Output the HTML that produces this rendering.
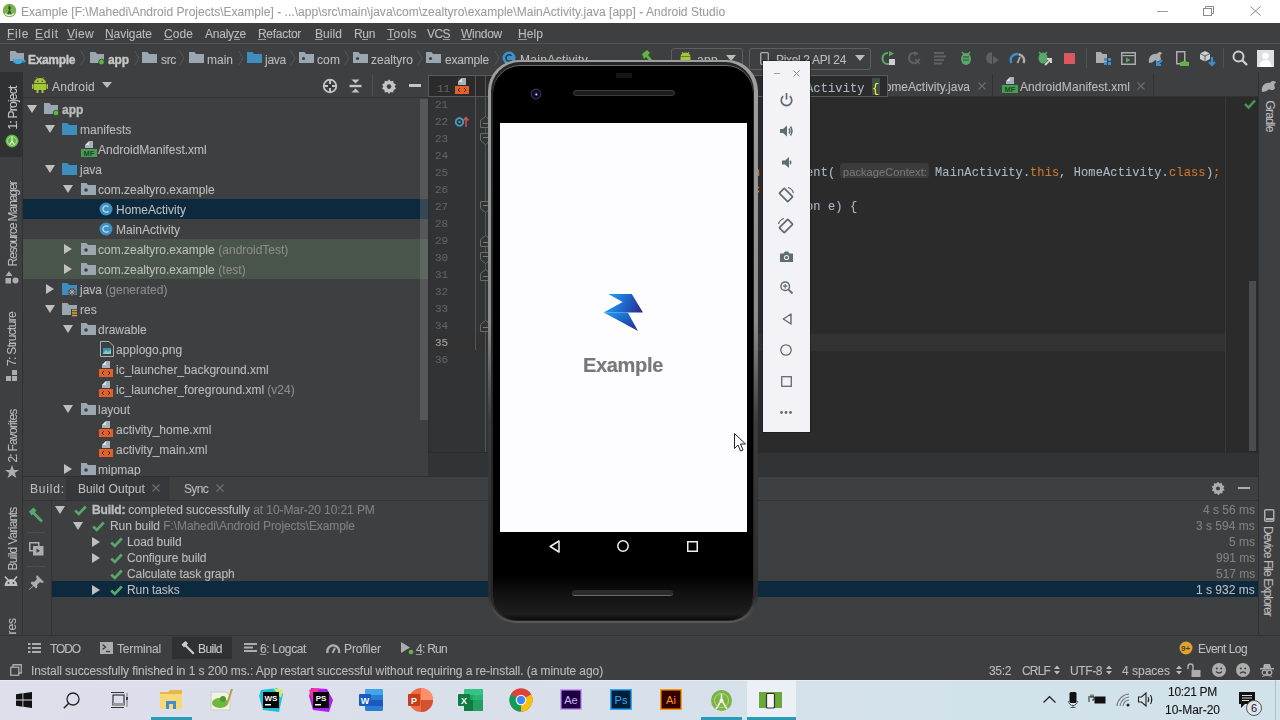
<!DOCTYPE html>
<html><head><meta charset="utf-8">
<style>
*{margin:0;padding:0;box-sizing:border-box}
html,body{width:1280px;height:720px;overflow:hidden;background:#3e3f41}
body{position:relative;font-family:"Liberation Sans",sans-serif;font-size:12px;color:#bbbbbb}
.a{position:absolute}
.t{position:absolute;white-space:pre;-webkit-text-stroke:0.1px currentColor;will-change:transform}
svg{position:absolute;overflow:visible}
u{text-decoration:underline;text-underline-offset:2px}
</style></head><body>

<div class="a" style="left:0px;top:0px;width:1280px;height:23px;background:#ffffff;"></div>
<svg style="left:2px;top:3px;" width="16" height="16" viewBox="0 0 16 16"><circle cx="7.5" cy="7.5" r="6.8" fill="#7fb24e"/><path d="M7.5 2.5V8.5M5.3 12.5L7.5 8L9.7 12.5" stroke="#2e5b2b" stroke-width="1.5" fill="none"/><circle cx="7.5" cy="5" r="1.3" fill="#2e5b2b"/><path d="M3.2 10.5A5 4 0 0 0 11.8 10.5" stroke="#eaf5e0" stroke-width="1.4" fill="none"/></svg>
<div class="t" style="left:21px;top:6px;font-size:12px;line-height:12px;color:#9c9c9c;font-family:'Liberation Sans',sans-serif;letter-spacing:0.031px;">Example [F:\Mahedi\Android Projects\Example] - ...\app\src\main\java\com\zealtyro\example\MainActivity.java [app] - Android Studio</div>
<div class="a" style="left:1157px;top:11px;width:11px;height:1px;background:#9a9a9a;"></div>
<svg style="left:1203px;top:6px;" width="11" height="10" viewBox="0 0 11 10"><rect x="0.5" y="2.5" width="8" height="7" fill="none" stroke="#8a8a8a"/><path d="M2.5 2.5V0.5H10.5V7.5H8.5" fill="none" stroke="#8a8a8a"/></svg>
<svg style="left:1250px;top:6px;" width="11" height="10" viewBox="0 0 11 10"><path d="M0.5 0.5L10.5 9.5M10.5 0.5L0.5 9.5" stroke="#8a8a8a" stroke-width="1"/></svg>
<div class="a" style="left:0px;top:23px;width:1280px;height:20px;background:#3e3f41;"></div>
<div class="a" style="left:0px;top:43px;width:1280px;height:1px;background:#515355;"></div>
<div class="t" style="left:7px;top:28px;font-size:12px;line-height:12px;color:#bbbbbb;font-family:'Liberation Sans',sans-serif;letter-spacing:0.664px;">File</div>
<div class="a" style="left:7px;top:39px;width:8px;height:1px;background:#9a9a9a;"></div>
<div class="t" style="left:35px;top:28px;font-size:12px;line-height:12px;color:#bbbbbb;font-family:'Liberation Sans',sans-serif;letter-spacing:0.832px;">Edit</div>
<div class="a" style="left:35px;top:39px;width:9px;height:1px;background:#9a9a9a;"></div>
<div class="t" style="left:67px;top:28px;font-size:12px;line-height:12px;color:#bbbbbb;font-family:'Liberation Sans',sans-serif;letter-spacing:0.301px;">View</div>
<div class="a" style="left:67px;top:39px;width:8px;height:1px;background:#9a9a9a;"></div>
<div class="t" style="left:105px;top:28px;font-size:12px;line-height:12px;color:#bbbbbb;font-family:'Liberation Sans',sans-serif;letter-spacing:-0.045px;">Navigate</div>
<div class="a" style="left:105px;top:39px;width:9px;height:1px;background:#9a9a9a;"></div>
<div class="t" style="left:164px;top:28px;font-size:12px;line-height:12px;color:#bbbbbb;font-family:'Liberation Sans',sans-serif;letter-spacing:0.078px;">Code</div>
<div class="a" style="left:164px;top:39px;width:9px;height:1px;background:#9a9a9a;"></div>
<div class="t" style="left:205px;top:28px;font-size:12px;line-height:12px;color:#bbbbbb;font-family:'Liberation Sans',sans-serif;letter-spacing:-0.241px;">Analyze</div>
<div class="a" style="left:234px;top:39px;width:6px;height:1px;background:#9a9a9a;"></div>
<div class="t" style="left:258px;top:28px;font-size:12px;line-height:12px;color:#bbbbbb;font-family:'Liberation Sans',sans-serif;letter-spacing:-0.293px;">Refactor</div>
<div class="a" style="left:258px;top:39px;width:8px;height:1px;background:#9a9a9a;"></div>
<div class="t" style="left:315px;top:28px;font-size:12px;line-height:12px;color:#bbbbbb;font-family:'Liberation Sans',sans-serif;letter-spacing:0.062px;">Build</div>
<div class="a" style="left:315px;top:39px;width:8px;height:1px;background:#9a9a9a;"></div>
<div class="t" style="left:354px;top:28px;font-size:12px;line-height:12px;color:#bbbbbb;font-family:'Liberation Sans',sans-serif;letter-spacing:-0.339px;">Run</div>
<div class="a" style="left:362px;top:39px;width:6px;height:1px;background:#9a9a9a;"></div>
<div class="t" style="left:387px;top:28px;font-size:12px;line-height:12px;color:#bbbbbb;font-family:'Liberation Sans',sans-serif;letter-spacing:0.397px;">Tools</div>
<div class="a" style="left:387px;top:39px;width:8px;height:1px;background:#9a9a9a;"></div>
<div class="t" style="left:427px;top:28px;font-size:12px;line-height:12px;color:#bbbbbb;font-family:'Liberation Sans',sans-serif;letter-spacing:-0.557px;">VCS</div>
<div class="a" style="left:443px;top:39px;width:7px;height:1px;background:#9a9a9a;"></div>
<div class="t" style="left:461px;top:28px;font-size:12px;line-height:12px;color:#bbbbbb;font-family:'Liberation Sans',sans-serif;letter-spacing:-0.281px;">Window</div>
<div class="a" style="left:461px;top:39px;width:11px;height:1px;background:#9a9a9a;"></div>
<div class="t" style="left:518px;top:28px;font-size:12px;line-height:12px;color:#bbbbbb;font-family:'Liberation Sans',sans-serif;letter-spacing:0.078px;">Help</div>
<div class="a" style="left:518px;top:39px;width:9px;height:1px;background:#9a9a9a;"></div>
<div class="a" style="left:0px;top:44px;width:1280px;height:28px;background:#3e3f41;"></div>
<svg style="left:10px;top:51px;" width="16" height="14" viewBox="0 0 16 14"><path d="M0 0H5.5L7 2H14V10H0Z" fill="#9aa7b0"/><path d="M3 8H13C13 12 11 13 8 13C5 13 3 12 3 8Z" fill="#40a8dc"/><path d="M12.5 9.5H15V11H12.5" stroke="#40a8dc" fill="none"/></svg>
<div class="t" style="left:28px;top:54px;font-size:12px;line-height:12px;color:#c8c8c8;font-family:'Liberation Sans',sans-serif;font-weight:bold;-webkit-text-stroke:0.35px currentColor;letter-spacing:-0.335px;">Example</div>
<svg style="left:80px;top:50px;" width="6" height="16" viewBox="0 0 6 16"><path d="M0.5 0.5L5 8L0.5 15.5" fill="none" stroke="#555759" stroke-width="1"/></svg>
<svg style="left:90px;top:52px;" width="15" height="13" viewBox="0 0 15 13"><path d="M0 0H5.5L7 2H14V11H0Z" fill="#9aa7b0"/><circle cx="11.5" cy="10" r="2.8" fill="#62b543" stroke="#2f4a2a" stroke-width="0.8"/></svg>
<div class="t" style="left:108px;top:54px;font-size:12px;line-height:12px;color:#c8c8c8;font-family:'Liberation Sans',sans-serif;font-weight:bold;-webkit-text-stroke:0.35px currentColor;letter-spacing:-0.109px;">app</div>
<svg style="left:134px;top:50px;" width="6" height="16" viewBox="0 0 6 16"><path d="M0.5 0.5L5 8L0.5 15.5" fill="none" stroke="#555759" stroke-width="1"/></svg>
<svg style="left:142px;top:52px;" width="15" height="11" viewBox="0 0 15 11"><path d="M0 0H5.5L7 2H15V11H0Z" fill="#9aa7b0"/></svg>
<div class="t" style="left:161px;top:54px;font-size:12px;line-height:12px;color:#bbbbbb;font-family:'Liberation Sans',sans-serif;letter-spacing:-0.333px;">src</div>
<svg style="left:179px;top:50px;" width="6" height="16" viewBox="0 0 6 16"><path d="M0.5 0.5L5 8L0.5 15.5" fill="none" stroke="#555759" stroke-width="1"/></svg>
<svg style="left:189px;top:52px;" width="15" height="11" viewBox="0 0 15 11"><path d="M0 0H5.5L7 2H15V11H0Z" fill="#9aa7b0"/></svg>
<div class="t" style="left:207px;top:54px;font-size:12px;line-height:12px;color:#bbbbbb;font-family:'Liberation Sans',sans-serif;letter-spacing:-0.004px;">main</div>
<svg style="left:238px;top:50px;" width="6" height="16" viewBox="0 0 6 16"><path d="M0.5 0.5L5 8L0.5 15.5" fill="none" stroke="#555759" stroke-width="1"/></svg>
<svg style="left:247px;top:52px;" width="15" height="11" viewBox="0 0 15 11"><path d="M0 0H5.5L7 2H15V11H0Z" fill="#3d8dbf"/></svg>
<div class="t" style="left:265px;top:54px;font-size:12px;line-height:12px;color:#bbbbbb;font-family:'Liberation Sans',sans-serif;letter-spacing:-0.254px;">java</div>
<svg style="left:290px;top:50px;" width="6" height="16" viewBox="0 0 6 16"><path d="M0.5 0.5L5 8L0.5 15.5" fill="none" stroke="#555759" stroke-width="1"/></svg>
<svg style="left:299px;top:52px;" width="15" height="11" viewBox="0 0 15 11"><path d="M0 0H5.5L7 2H15V11H0Z" fill="#9aa7b0"/><circle cx="4.5" cy="6.5" r="1.6" fill="#3e3f41"/></svg>
<div class="t" style="left:317px;top:54px;font-size:12px;line-height:12px;color:#bbbbbb;font-family:'Liberation Sans',sans-serif;letter-spacing:0.109px;">com</div>
<svg style="left:344px;top:50px;" width="6" height="16" viewBox="0 0 6 16"><path d="M0.5 0.5L5 8L0.5 15.5" fill="none" stroke="#555759" stroke-width="1"/></svg>
<svg style="left:353px;top:52px;" width="15" height="11" viewBox="0 0 15 11"><path d="M0 0H5.5L7 2H15V11H0Z" fill="#9aa7b0"/><circle cx="4.5" cy="6.5" r="1.6" fill="#3e3f41"/></svg>
<div class="t" style="left:371px;top:54px;font-size:12px;line-height:12px;color:#bbbbbb;font-family:'Liberation Sans',sans-serif;letter-spacing:-0.002px;">zealtyro</div>
<svg style="left:417px;top:50px;" width="6" height="16" viewBox="0 0 6 16"><path d="M0.5 0.5L5 8L0.5 15.5" fill="none" stroke="#555759" stroke-width="1"/></svg>
<svg style="left:426px;top:52px;" width="15" height="11" viewBox="0 0 15 11"><path d="M0 0H5.5L7 2H15V11H0Z" fill="#9aa7b0"/><circle cx="4.5" cy="6.5" r="1.6" fill="#3e3f41"/></svg>
<div class="t" style="left:445px;top:54px;font-size:12px;line-height:12px;color:#bbbbbb;font-family:'Liberation Sans',sans-serif;letter-spacing:-0.194px;">example</div>
<svg style="left:494px;top:50px;" width="6" height="16" viewBox="0 0 6 16"><path d="M0.5 0.5L5 8L0.5 15.5" fill="none" stroke="#555759" stroke-width="1"/></svg>
<svg style="left:502px;top:51px;" width="14" height="14" viewBox="0 0 14 14"><circle cx="7" cy="7" r="6.5" fill="#3e91c4"/><path d="M9.5 4.8A3.2 3.2 0 1 0 9.5 9.2" fill="none" stroke="#1c3b52" stroke-width="1.6"/></svg>
<div class="t" style="left:520px;top:54px;font-size:12px;line-height:12px;color:#bbbbbb;font-family:'Liberation Sans',sans-serif;letter-spacing:0.332px;">MainActivity</div>
<svg style="left:641px;top:50px;" width="14" height="14" viewBox="0 0 14 14"><path d="M1 4L6 0L9 3L7 5L13 12L11 14L5 7L3 9Z" fill="#62b543"/></svg>
<div class="a" style="left:671px;top:48px;width:72px;height:22px;background:none;border:1px solid #5e6060;border-radius:3px"></div>
<svg style="left:679px;top:52px;" width="13" height="13" viewBox="0 0 13 13"><path d="M1.5 5H11.5V10.5H1.5Z" fill="#a4c639"/><path d="M1.5 4.5A5 4 0 0 1 11.5 4.5Z" fill="#a4c639"/><path d="M3 0L4.5 2.5M10 0L8.5 2.5" stroke="#a4c639"/></svg>
<div class="t" style="left:697px;top:54px;font-size:12px;line-height:12px;color:#bbbbbb;font-family:'Liberation Sans',sans-serif;letter-spacing:0.328px;">app</div>
<svg style="left:726px;top:55px;" width="10" height="6" viewBox="0 0 10 6"><path d="M0 0H10L5 6Z" fill="#bbbbbb"/></svg>
<div class="a" style="left:749px;top:48px;width:122px;height:22px;background:none;border:1px solid #5e6060;border-radius:3px"></div>
<svg style="left:760px;top:52px;" width="9" height="13" viewBox="0 0 9 13"><rect x="0.7" y="0.7" width="7.6" height="11.6" rx="1" fill="none" stroke="#adadad" stroke-width="1.3"/></svg>
<div class="t" style="left:776px;top:54px;font-size:12px;line-height:12px;color:#bbbbbb;font-family:'Liberation Sans',sans-serif;letter-spacing:-0.335px;">Pixel 2 API 24</div>
<svg style="left:855px;top:55px;" width="10" height="6" viewBox="0 0 10 6"><path d="M0 0H10L5 6Z" fill="#bbbbbb"/></svg>
<svg style="left:881px;top:51px;" width="15" height="14" viewBox="0 0 15 14"><path d="M7 2A5.5 5.5 0 1 0 12.5 8" fill="none" stroke="#59a869" stroke-width="2.2"/><path d="M8 0L13 2.5L8 5.5Z" fill="#59a869"/><rect x="8" y="8" width="6" height="6" fill="#cfcfcf"/></svg>
<svg style="left:907px;top:51px;" width="14" height="14" viewBox="0 0 14 14"><path d="M7 2A5 5 0 1 0 12 8" fill="none" stroke="#5e6163" stroke-width="2.2"/><path d="M7 0L12 2.5L7 5Z" fill="#5e6163"/><path d="M8 8L13 13M13 8L8 13" stroke="#5e6163" stroke-width="1.5"/></svg>
<svg style="left:934px;top:52px;" width="14" height="13" viewBox="0 0 14 13"><path d="M0 1H10M0 4.5H12M0 8H10M0 11.5H8" stroke="#5e6163" stroke-width="2"/></svg>
<svg style="left:959px;top:51px;" width="14" height="14" viewBox="0 0 14 14"><ellipse cx="7" cy="8" rx="5" ry="6" fill="#59a869"/><path d="M3 1L5 3M11 1L9 3" stroke="#59a869" stroke-width="1.5"/><path d="M4 6H10M4 9H10" stroke="#3e3f41" stroke-width="1.2"/></svg>
<svg style="left:985px;top:51px;" width="15" height="14" viewBox="0 0 15 14"><path d="M7 1A6 6 0 1 0 7 13" fill="#5e6163"/><path d="M8 5L14 9L8 13Z" fill="#5e6163"/></svg>
<svg style="left:1010px;top:52px;" width="15" height="12" viewBox="0 0 15 12"><path d="M1.5 11A6 6 0 0 1 9 2.5" fill="none" stroke="#3d8fd0" stroke-width="2.4"/><path d="M9 2.5A6 6 0 0 1 13.5 11" fill="none" stroke="#adadad" stroke-width="2.4"/><path d="M7.5 11L10 5" stroke="#adadad" stroke-width="1.8"/></svg>
<svg style="left:1037px;top:51px;" width="15" height="14" viewBox="0 0 15 14"><ellipse cx="6" cy="7" rx="4.5" ry="5.5" fill="#59a869"/><path d="M2 1L4 3M10 1L8 3" stroke="#59a869" stroke-width="1.5"/><path d="M8 14L14 8M10 8H14V12" stroke="#cfcfcf" stroke-width="2" fill="none"/></svg>
<div class="a" style="left:1064px;top:53px;width:11px;height:11px;background:#db5860;"></div>
<div class="a" style="left:1086px;top:48px;width:1px;height:20px;background:#4e5052;"></div>
<svg style="left:1096px;top:52px;" width="15" height="13" viewBox="0 0 15 13"><path d="M0 0H5L6.5 2H11V11H0Z" fill="#adadad"/><rect x="8" y="6" width="3" height="3" fill="#3d8fd0"/><rect x="12" y="6" width="3" height="3" fill="#3d8fd0"/><rect x="8" y="10" width="3" height="3" fill="#3d8fd0"/><rect x="12" y="10" width="3" height="3" fill="#3d8fd0"/></svg>
<svg style="left:1121px;top:52px;" width="15" height="13" viewBox="0 0 15 13"><rect x="0.75" y="0.75" width="13.5" height="11.5" fill="none" stroke="#adadad" stroke-width="1.5"/><rect x="1.5" y="3" width="12" height="1.2" fill="#adadad"/><path d="M5 5.5L9.5 8L5 10.5Z" fill="#59a869"/></svg>
<svg style="left:1148px;top:51px;" width="16" height="15" viewBox="0 0 16 15"><path d="M1 12C0 6 4 2 9 3C11 0 14 1 14 3C12 3 12 5 13 8C12 11 8 10 7 9C6 11 3 12 1 12Z" fill="#adadad"/><path d="M9 14L14 9M9 10V14H13" stroke="#3d8fd0" stroke-width="2" fill="none"/></svg>
<svg style="left:1176px;top:51px;" width="13" height="15" viewBox="0 0 13 15"><rect x="0.75" y="0.75" width="8" height="12" fill="none" stroke="#adadad" stroke-width="1.5"/><path d="M4 14A4.5 4 0 0 1 13 14Z" fill="#62b543"/><rect x="4" y="11" width="9" height="4" fill="#62b543"/></svg>
<svg style="left:1200px;top:51px;" width="16" height="16" viewBox="0 0 16 16"><path d="M5 0L10 2.5V8L5 10.5L0 8V2.5Z" fill="#cfcfcf"/><path d="M5 5V10.5M0 2.5L5 5L10 2.5" stroke="#3e3f41" stroke-width="0.8" fill="none"/><path d="M12 6V14M9 11L12 14L15 11" stroke="#3d8fd0" stroke-width="2" fill="none"/></svg>
<div class="a" style="left:1223px;top:48px;width:1px;height:20px;background:#4e5052;"></div>
<svg style="left:1232px;top:50px;" width="16" height="17" viewBox="0 0 16 17"><circle cx="6.5" cy="6.5" r="5" fill="none" stroke="#cfcfcf" stroke-width="2"/><path d="M10 10L15 15" stroke="#cfcfcf" stroke-width="2.4"/></svg>
<svg style="left:1257px;top:50px;" width="17" height="17" viewBox="0 0 17 17"><rect width="17" height="17" fill="#e0e0e0"/><circle cx="8.5" cy="6" r="3.2" fill="#fff"/><path d="M2.5 17C2.5 12 5 10 8.5 10C12 10 14.5 12 14.5 17Z" fill="#fff"/></svg>
<div class="a" style="left:0px;top:72px;width:22px;height:562px;background:#3e3f41;"></div>
<div class="a" style="left:0px;top:72px;width:22px;height:85px;background:#2f3133;"></div>
<div class="a" style="left:22px;top:72px;width:1px;height:562px;background:#2e3032;"></div>
<div class="t" style="left:-9.5px;top:101.5px;width:63px;font-size:12px;line-height:12px;color:#c8c8c8;letter-spacing:-0.767px;transform-origin:21.5px 6.0px;transform:rotate(-90deg);will-change:auto">1: Project</div>
<svg style="left:5px;top:134px;" width="14" height="14" viewBox="0 0 14 14"><circle cx="7" cy="7" r="6.5" fill="#62b543"/><path d="M7 3V7.5M4.5 11L7 7L9.5 11" stroke="#e8f5e0" stroke-width="1.2" fill="none"/><circle cx="7" cy="7" r="4.5" fill="none" stroke="#cfe8c0" stroke-width="0.7"/></svg>
<div class="t" style="left:-30.5px;top:217.5px;width:105px;font-size:12px;line-height:12px;color:#bbbbbb;letter-spacing:-1.065px;transform-origin:42.5px 6.0px;transform:rotate(-90deg);will-change:auto">Resource Manager</div>
<svg style="left:5px;top:271px;" width="14" height="13" viewBox="0 0 14 13"><path d="M4 0L7.5 5H0.5Z" fill="#adadad"/><rect x="0.5" y="7" width="5.5" height="5.5" fill="#adadad"/><circle cx="10.5" cy="9.5" r="3" fill="#adadad"/></svg>
<div class="t" style="left:-15.0px;top:333.0px;width:74px;font-size:12px;line-height:12px;color:#bbbbbb;letter-spacing:-0.667px;transform-origin:27.0px 6.0px;transform:rotate(-90deg);will-change:auto">7: Structure</div>
<svg style="left:6px;top:370px;" width="12" height="12" viewBox="0 0 12 12"><rect x="0" y="6" width="5" height="5" fill="#adadad"/><rect x="6" y="6" width="5" height="5" fill="#adadad"/><rect x="6" y="0" width="5" height="5" fill="#adadad"/></svg>
<div class="t" style="left:-14.5px;top:429.5px;width:73px;font-size:12px;line-height:12px;color:#bbbbbb;letter-spacing:-0.806px;transform-origin:26.5px 6.0px;transform:rotate(-90deg);will-change:auto">2: Favorites</div>
<svg style="left:5px;top:465px;" width="14" height="14" viewBox="0 0 14 14"><path d="M7 0L8.8 5H14L9.8 8L11.4 13L7 10L2.6 13L4.2 8L0 5H5.2Z" fill="#adadad"/></svg>
<div class="t" style="left:-19.5px;top:532.5px;width:83px;font-size:12px;line-height:12px;color:#bbbbbb;letter-spacing:-0.724px;transform-origin:31.5px 6.0px;transform:rotate(-90deg);will-change:auto">Build Variants</div>
<svg style="left:4px;top:576px;" width="14" height="10" viewBox="0 0 14 10"><path d="M0.5 10A6.5 7 0 0 1 13.5 10Z" fill="#c0c0c0"/><path d="M1 0.5L4 4M13 0.5L10 4" stroke="#c0c0c0" stroke-width="1.6"/><circle cx="4.5" cy="7" r="0.9" fill="#3e3f41"/><circle cx="9.5" cy="7" r="0.9" fill="#3e3f41"/></svg>
<div class="t" style="left:-32.0px;top:656.0px;width:108.03125px;font-size:12px;line-height:12px;color:#bbbbbb;letter-spacing:0.000px;transform-origin:44.0px 6.0px;transform:rotate(-90deg);will-change:auto">Layout Captures</div>
<div class="a" style="left:0px;top:634px;width:22px;height:2px;background:#3e3f41;"></div>
<div class="a" style="left:23px;top:72px;width:405px;height:404px;background:#3e3f41;"></div>
<div class="a" style="left:23px;top:97px;width:405px;height:1px;background:#323232;"></div>
<svg style="left:32px;top:77px;" width="16" height="17" viewBox="0 0 16 17"><path d="M2 7H14V13H2Z" fill="#a4c639"/><path d="M2 6.3A6 5.3 0 0 1 14 6.3Z" fill="#a4c639"/><rect x="0" y="7" width="1.6" height="5" rx="0.8" fill="#a4c639"/><rect x="14.4" y="7" width="1.6" height="5" rx="0.8" fill="#a4c639"/><rect x="4.5" y="12" width="2" height="4" fill="#a4c639"/><rect x="9.5" y="12" width="2" height="4" fill="#a4c639"/><path d="M4.5 0.5L6 2.5M11.5 0.5L10 2.5" stroke="#a4c639"/><circle cx="5.7" cy="4.2" r="0.7" fill="#3e3f41"/><circle cx="10.3" cy="4.2" r="0.7" fill="#3e3f41"/></svg>
<div class="t" style="left:52px;top:81px;font-size:12px;line-height:12px;color:#bbbbbb;font-family:'Liberation Sans',sans-serif;letter-spacing:0.234px;">Android</div>
<svg style="left:102px;top:82px;" width="10" height="6" viewBox="0 0 10 6"><path d="M0 0H10L5 6Z" fill="#bbbbbb"/></svg>
<svg style="left:322px;top:78px;" width="16" height="16" viewBox="0 0 16 16"><circle cx="8" cy="8" r="6.3" fill="none" stroke="#c4c4c4" stroke-width="1.8"/><path d="M8 2V6M8 10V14M2 8H6M10 8H14" stroke="#c4c4c4" stroke-width="2"/><rect x="6.5" y="6.5" width="3" height="3" fill="#333"/></svg>
<svg style="left:349px;top:79px;" width="13" height="14" viewBox="0 0 13 14"><path d="M2.5 0.5H10.5L6.5 4.5Z" fill="#c4c4c4"/><rect x="0.5" y="5.8" width="12" height="2.4" fill="#c4c4c4"/><path d="M2.5 13.5H10.5L6.5 9.5Z" fill="#c4c4c4"/></svg>
<div class="a" style="left:372px;top:75px;width:1px;height:21px;background:#4e5052;"></div>
<svg style="left:382px;top:79px;" width="14" height="14" viewBox="0 0 14 14"><path d="M7 0.3L8.6 2.3L11.2 1.8L11.6 4.3L14 5.4L12.7 7.6L14 9.8L11.6 10.9L11.2 13.4L8.6 12.9L7 14.9L5.4 12.9L2.8 13.4L2.4 10.9L0 9.8L1.3 7.6L0 5.4L2.4 4.3L2.8 1.8L5.4 2.3Z" fill="#c4c4c4"/><circle cx="7" cy="7.6" r="2.3" fill="#3e3f41"/></svg>
<div class="a" style="left:409px;top:84px;width:12px;height:3px;background:#c4c4c4;"></div>
<div class="a" style="left:0;top:0;width:1280px;height:720px;clip-path:inset(98px 852px 244px 23px)">
<svg style="left:27px;top:105px;" width="10" height="8" viewBox="0 0 10 8"><path d="M0 0H10L5 8Z" fill="#bfbfbf"/></svg>
<svg style="left:44px;top:103px;" width="15" height="13" viewBox="0 0 15 13"><path d="M0 0H5.5L7 2H14V11H0Z" fill="#9aa7b0"/><circle cx="12" cy="10" r="2.8" fill="#62b543" stroke="#2f4a2a" stroke-width="0.8"/></svg>
<div class="t" style="left:62px;top:104px;font-size:12px;line-height:12px;color:#bbbbbb;font-family:'Liberation Sans',sans-serif;font-weight:bold;-webkit-text-stroke:0.35px currentColor;">app</div>
<svg style="left:45px;top:125px;" width="10" height="8" viewBox="0 0 10 8"><path d="M0 0H10L5 8Z" fill="#bfbfbf"/></svg>
<svg style="left:62px;top:123px;" width="15" height="12" viewBox="0 0 15 12"><path d="M0 0H5.5L7 2H15V12H0Z" fill="#3d8dbf"/></svg>
<div class="t" style="left:80px;top:124px;font-size:12px;line-height:12px;color:#bbbbbb;font-family:'Liberation Sans',sans-serif;">manifests</div>
<svg style="left:81px;top:141px;" width="16" height="16" viewBox="0 0 16 16"><path d="M4 0H12V7H4Z" fill="#a9b2ba"/><path d="M4 4L8 0V4Z" fill="#dfe3e6"/><path d="M4 0H8L4 4Z" fill="#3e3f41"/><rect x="0" y="8" width="16" height="8" fill="#499c54"/><text x="8" y="15" font-size="7.5" font-family="Liberation Sans" font-weight="bold" fill="#1f4a25" text-anchor="middle">MF</text></svg>
<div class="t" style="left:98px;top:144px;font-size:12px;line-height:12px;color:#bbbbbb;font-family:'Liberation Sans',sans-serif;">AndroidManifest.xml</div>
<svg style="left:45px;top:165px;" width="10" height="8" viewBox="0 0 10 8"><path d="M0 0H10L5 8Z" fill="#bfbfbf"/></svg>
<svg style="left:62px;top:163px;" width="15" height="12" viewBox="0 0 15 12"><path d="M0 0H5.5L7 2H15V12H0Z" fill="#3d8dbf"/></svg>
<div class="t" style="left:80px;top:164px;font-size:12px;line-height:12px;color:#bbbbbb;font-family:'Liberation Sans',sans-serif;">java</div>
<svg style="left:63px;top:185px;" width="10" height="8" viewBox="0 0 10 8"><path d="M0 0H10L5 8Z" fill="#bfbfbf"/></svg>
<svg style="left:81px;top:183px;" width="15" height="12" viewBox="0 0 15 12"><path d="M0 0H5.5L7 2H15V12H0Z" fill="#9aa7b0"/><circle cx="5" cy="7" r="1.8" fill="#3e3f41"/></svg>
<div class="t" style="left:98px;top:184px;font-size:12px;line-height:12px;color:#bbbbbb;font-family:'Liberation Sans',sans-serif;">com.zealtyro.example</div>
<div class="a" style="left:23px;top:199px;width:405px;height:20px;background:#0d293e;"></div>
<svg style="left:99px;top:202px;" width="14" height="14" viewBox="0 0 14 14"><circle cx="7" cy="7" r="6.5" fill="#3e91c4"/><path d="M9.5 4.8A3.2 3.2 0 1 0 9.5 9.2" fill="none" stroke="#b8d8ec" stroke-width="1.3"/></svg>
<div class="t" style="left:116px;top:204px;font-size:12px;line-height:12px;color:#bbbbbb;font-family:'Liberation Sans',sans-serif;">HomeActivity</div>
<svg style="left:99px;top:222px;" width="14" height="14" viewBox="0 0 14 14"><circle cx="7" cy="7" r="6.5" fill="#3e91c4"/><path d="M9.5 4.8A3.2 3.2 0 1 0 9.5 9.2" fill="none" stroke="#b8d8ec" stroke-width="1.3"/></svg>
<div class="t" style="left:116px;top:224px;font-size:12px;line-height:12px;color:#bbbbbb;font-family:'Liberation Sans',sans-serif;">MainActivity</div>
<div class="a" style="left:23px;top:239px;width:405px;height:20px;background:#49544a;"></div>
<svg style="left:64px;top:244px;" width="8" height="10" viewBox="0 0 8 10"><path d="M0 0L8 5L0 10Z" fill="#bfbfbf"/></svg>
<svg style="left:81px;top:243px;" width="15" height="12" viewBox="0 0 15 12"><path d="M0 0H5.5L7 2H15V12H0Z" fill="#9aa7b0"/><circle cx="5" cy="7" r="1.8" fill="#3e3f41"/></svg>
<div class="t" style="left:98px;top:244px;font-size:12px;line-height:12px;color:#bbbbbb;font-family:'Liberation Sans',sans-serif;">com.zealtyro.example</div>
<div class="t" style="left:214.703125px;top:244px;font-size:12px;line-height:12px;color:#8c8c8c;font-family:'Liberation Sans',sans-serif;"> (androidTest)</div>
<div class="a" style="left:23px;top:259px;width:405px;height:20px;background:#49544a;"></div>
<svg style="left:64px;top:264px;" width="8" height="10" viewBox="0 0 8 10"><path d="M0 0L8 5L0 10Z" fill="#bfbfbf"/></svg>
<svg style="left:81px;top:263px;" width="15" height="12" viewBox="0 0 15 12"><path d="M0 0H5.5L7 2H15V12H0Z" fill="#9aa7b0"/><circle cx="5" cy="7" r="1.8" fill="#3e3f41"/></svg>
<div class="t" style="left:98px;top:264px;font-size:12px;line-height:12px;color:#bbbbbb;font-family:'Liberation Sans',sans-serif;">com.zealtyro.example</div>
<div class="t" style="left:214.703125px;top:264px;font-size:12px;line-height:12px;color:#8c8c8c;font-family:'Liberation Sans',sans-serif;"> (test)</div>
<svg style="left:46px;top:284px;" width="8" height="10" viewBox="0 0 8 10"><path d="M0 0L8 5L0 10Z" fill="#bfbfbf"/></svg>
<svg style="left:62px;top:283px;" width="15" height="13" viewBox="0 0 15 13"><path d="M0 0H5.5L7 2H15V12H0Z" fill="#3d8dbf"/><circle cx="10" cy="9" r="3.8" fill="#3e3f41"/><path d="M10 5.5V12.5M6.5 9H13.5M7.5 6.5L12.5 11.5M12.5 6.5L7.5 11.5" stroke="#adadad" stroke-width="1"/></svg>
<div class="t" style="left:80px;top:284px;font-size:12px;line-height:12px;color:#bbbbbb;font-family:'Liberation Sans',sans-serif;">java</div>
<div class="t" style="left:102.015625px;top:284px;font-size:12px;line-height:12px;color:#8c8c8c;font-family:'Liberation Sans',sans-serif;"> (generated)</div>
<svg style="left:45px;top:305px;" width="10" height="8" viewBox="0 0 10 8"><path d="M0 0H10L5 8Z" fill="#bfbfbf"/></svg>
<svg style="left:62px;top:303px;" width="16" height="14" viewBox="0 0 16 14"><path d="M0 0H5.5L7 2H15V12H0Z" fill="#9aa7b0"/><rect x="9" y="6" width="7" height="8" fill="#3e3f41"/><path d="M10 7.5H15M10 10H15M10 12.5H15" stroke="#d9a343" stroke-width="1.4"/></svg>
<div class="t" style="left:80px;top:304px;font-size:12px;line-height:12px;color:#bbbbbb;font-family:'Liberation Sans',sans-serif;">res</div>
<svg style="left:63px;top:325px;" width="10" height="8" viewBox="0 0 10 8"><path d="M0 0H10L5 8Z" fill="#bfbfbf"/></svg>
<svg style="left:81px;top:323px;" width="15" height="12" viewBox="0 0 15 12"><path d="M0 0H5.5L7 2H15V12H0Z" fill="#9aa7b0"/><circle cx="5" cy="7" r="1.8" fill="#3e3f41"/></svg>
<div class="t" style="left:98px;top:324px;font-size:12px;line-height:12px;color:#bbbbbb;font-family:'Liberation Sans',sans-serif;">drawable</div>
<svg style="left:100px;top:341px;" width="14" height="16" viewBox="0 0 14 16"><path d="M0.5 0.5H9L13.5 5V15.5H0.5Z" fill="#3e3f41" stroke="#a9b2ba"/><rect x="3" y="7" width="8" height="6" fill="#3f8fa6"/><path d="M3 12L6 9L8 11L11 8V13H3Z" fill="#7ec8c8"/></svg>
<div class="t" style="left:116px;top:344px;font-size:12px;line-height:12px;color:#bbbbbb;font-family:'Liberation Sans',sans-serif;">applogo.png</div>
<svg style="left:98px;top:361px;" width="16" height="16" viewBox="0 0 16 16"><path d="M4 0H12V7H4Z" fill="#a9b2ba"/><path d="M4 0L8 0L4 4Z" fill="#3e3f41"/><path d="M4 4L8 0V4Z" fill="#dfe3e6"/><rect x="1" y="8" width="14" height="8" fill="#e0622a"/><path d="M6 10L4 12L6 14M10 10L12 12L10 14" stroke="#5a1d05" stroke-width="1" fill="none"/></svg>
<div class="t" style="left:116px;top:364px;font-size:12px;line-height:12px;color:#bbbbbb;font-family:'Liberation Sans',sans-serif;">ic_launcher_background.xml</div>
<svg style="left:98px;top:381px;" width="16" height="16" viewBox="0 0 16 16"><path d="M4 0H12V7H4Z" fill="#a9b2ba"/><path d="M4 0L8 0L4 4Z" fill="#3e3f41"/><path d="M4 4L8 0V4Z" fill="#dfe3e6"/><rect x="1" y="8" width="14" height="8" fill="#e0622a"/><path d="M6 10L4 12L6 14M10 10L12 12L10 14" stroke="#5a1d05" stroke-width="1" fill="none"/></svg>
<div class="t" style="left:116px;top:384px;font-size:12px;line-height:12px;color:#bbbbbb;font-family:'Liberation Sans',sans-serif;">ic_launcher_foreground.xml</div>
<div class="t" style="left:264.078125px;top:384px;font-size:12px;line-height:12px;color:#8c8c8c;font-family:'Liberation Sans',sans-serif;"> (v24)</div>
<svg style="left:63px;top:405px;" width="10" height="8" viewBox="0 0 10 8"><path d="M0 0H10L5 8Z" fill="#bfbfbf"/></svg>
<svg style="left:81px;top:403px;" width="15" height="12" viewBox="0 0 15 12"><path d="M0 0H5.5L7 2H15V12H0Z" fill="#9aa7b0"/><circle cx="5" cy="7" r="1.8" fill="#3e3f41"/></svg>
<div class="t" style="left:98px;top:404px;font-size:12px;line-height:12px;color:#bbbbbb;font-family:'Liberation Sans',sans-serif;">layout</div>
<svg style="left:98px;top:421px;" width="16" height="16" viewBox="0 0 16 16"><path d="M4 0H12V7H4Z" fill="#a9b2ba"/><path d="M4 0L8 0L4 4Z" fill="#3e3f41"/><path d="M4 4L8 0V4Z" fill="#dfe3e6"/><rect x="1" y="8" width="14" height="8" fill="#e0622a"/><path d="M6 10L4 12L6 14M10 10L12 12L10 14" stroke="#5a1d05" stroke-width="1" fill="none"/></svg>
<div class="t" style="left:116px;top:424px;font-size:12px;line-height:12px;color:#bbbbbb;font-family:'Liberation Sans',sans-serif;">activity_home.xml</div>
<svg style="left:98px;top:441px;" width="16" height="16" viewBox="0 0 16 16"><path d="M4 0H12V7H4Z" fill="#a9b2ba"/><path d="M4 0L8 0L4 4Z" fill="#3e3f41"/><path d="M4 4L8 0V4Z" fill="#dfe3e6"/><rect x="1" y="8" width="14" height="8" fill="#e0622a"/><path d="M6 10L4 12L6 14M10 10L12 12L10 14" stroke="#5a1d05" stroke-width="1" fill="none"/></svg>
<div class="t" style="left:116px;top:444px;font-size:12px;line-height:12px;color:#bbbbbb;font-family:'Liberation Sans',sans-serif;">activity_main.xml</div>
<svg style="left:64px;top:464px;" width="8" height="10" viewBox="0 0 8 10"><path d="M0 0L8 5L0 10Z" fill="#bfbfbf"/></svg>
<svg style="left:81px;top:463px;" width="15" height="12" viewBox="0 0 15 12"><path d="M0 0H5.5L7 2H15V12H0Z" fill="#9aa7b0"/><circle cx="5" cy="7" r="1.8" fill="#3e3f41"/></svg>
<div class="t" style="left:98px;top:464px;font-size:12px;line-height:12px;color:#bbbbbb;font-family:'Liberation Sans',sans-serif;">mipmap</div>
</div>
<div class="a" style="left:420px;top:99px;width:8px;height:321px;background:rgba(150,152,155,0.28);"></div>
<div class="a" style="left:428px;top:72px;width:830px;height:25px;background:#3e3f41;"></div>
<div class="a" style="left:428px;top:96px;width:830px;height:1px;background:#323232;"></div>
<div class="t" style="left:876px;top:81px;font-size:12px;line-height:12px;color:#bbbbbb;font-family:'Liberation Sans',sans-serif;letter-spacing:-0.028px;">HomeActivity.java</div>
<svg style="left:978px;top:82px;" width="8" height="8" viewBox="0 0 8 8"><path d="M0.5 0.5L7.5 7.5M7.5 0.5L0.5 7.5" stroke="#6e6e6e" stroke-width="1.1"/></svg>
<div class="a" style="left:992px;top:74px;width:1px;height:22px;background:#323232;"></div>
<svg style="left:1002px;top:77px;" width="16" height="16" viewBox="0 0 16 16"><path d="M4 0H12V7H4Z" fill="#a9b2ba"/><path d="M4 4L8 0V4Z" fill="#dfe3e6"/><path d="M4 0H8L4 4Z" fill="#3e3f41"/><rect x="0" y="8" width="16" height="8" fill="#499c54"/><text x="8" y="15" font-size="7.5" font-family="Liberation Sans" font-weight="bold" fill="#1f4a25" text-anchor="middle">MF</text></svg>
<div class="t" style="left:1020px;top:81px;font-size:12px;line-height:12px;color:#bbbbbb;font-family:'Liberation Sans',sans-serif;letter-spacing:0.068px;">AndroidManifest.xml</div>
<svg style="left:1137px;top:82px;" width="8" height="8" viewBox="0 0 8 8"><path d="M0.5 0.5L7.5 7.5M7.5 0.5L0.5 7.5" stroke="#6e6e6e" stroke-width="1.1"/></svg>
<div class="a" style="left:1153px;top:74px;width:1px;height:22px;background:#323232;"></div>
<div class="a" style="left:428px;top:97px;width:62px;height:355px;background:#313335;"></div>
<div class="a" style="left:428px;top:97px;width:3px;height:355px;background:#2e3032;"></div>
<div class="a" style="left:490px;top:97px;width:768px;height:355px;background:#2b2b2b;"></div>
<div class="a" style="left:1225px;top:97px;width:1px;height:355px;background:#3a3a3a;"></div>
<div class="a" style="left:431px;top:334px;width:794px;height:17px;background:#323232;"></div>
<svg style="left:1244px;top:99px;" width="12" height="10" viewBox="0 0 12 10"><path d="M1 5L4.5 8.5L11 1.5" fill="none" stroke="#499c54" stroke-width="2.4"/></svg>
<div class="a" style="left:1249px;top:281px;width:7px;height:170px;background:#4a4c4e;"></div>
<div class="t" style="left:435px;top:100px;font-size:11px;line-height:11px;color:#606366;font-family:'Liberation Mono',monospace;">21</div>
<div class="t" style="left:435px;top:117px;font-size:11px;line-height:11px;color:#606366;font-family:'Liberation Mono',monospace;">22</div>
<div class="t" style="left:435px;top:134px;font-size:11px;line-height:11px;color:#606366;font-family:'Liberation Mono',monospace;">23</div>
<div class="t" style="left:435px;top:151px;font-size:11px;line-height:11px;color:#606366;font-family:'Liberation Mono',monospace;">24</div>
<div class="t" style="left:435px;top:168px;font-size:11px;line-height:11px;color:#606366;font-family:'Liberation Mono',monospace;">25</div>
<div class="t" style="left:435px;top:185px;font-size:11px;line-height:11px;color:#606366;font-family:'Liberation Mono',monospace;">26</div>
<div class="t" style="left:435px;top:202px;font-size:11px;line-height:11px;color:#606366;font-family:'Liberation Mono',monospace;">27</div>
<div class="t" style="left:435px;top:219px;font-size:11px;line-height:11px;color:#606366;font-family:'Liberation Mono',monospace;">28</div>
<div class="t" style="left:435px;top:236px;font-size:11px;line-height:11px;color:#606366;font-family:'Liberation Mono',monospace;">29</div>
<div class="t" style="left:435px;top:253px;font-size:11px;line-height:11px;color:#606366;font-family:'Liberation Mono',monospace;">30</div>
<div class="t" style="left:435px;top:270px;font-size:11px;line-height:11px;color:#606366;font-family:'Liberation Mono',monospace;">31</div>
<div class="t" style="left:435px;top:287px;font-size:11px;line-height:11px;color:#606366;font-family:'Liberation Mono',monospace;">32</div>
<div class="t" style="left:435px;top:304px;font-size:11px;line-height:11px;color:#606366;font-family:'Liberation Mono',monospace;">33</div>
<div class="t" style="left:435px;top:321px;font-size:11px;line-height:11px;color:#606366;font-family:'Liberation Mono',monospace;">34</div>
<div class="t" style="left:435px;top:338px;font-size:11px;line-height:11px;color:#a4a3a3;font-family:'Liberation Mono',monospace;">35</div>
<div class="t" style="left:435px;top:355px;font-size:11px;line-height:11px;color:#606366;font-family:'Liberation Mono',monospace;">36</div>
<div class="a" style="left:475px;top:97px;width:1px;height:253px;background:#555555;"></div>
<div class="a" style="left:485px;top:97px;width:1px;height:355px;background:#555555;"></div>
<svg style="left:455px;top:117px;" width="14" height="10" viewBox="0 0 14 10"><circle cx="4.5" cy="5" r="3.8" fill="none" stroke="#3f9fc5" stroke-width="1.8"/><circle cx="4.5" cy="5" r="1.2" fill="#3f9fc5"/><path d="M11 10V1M8.5 3.5L11 0.5L13.5 3.5" stroke="#c75450" stroke-width="1.5" fill="none"/></svg>
<svg style="left:480px;top:116px;" width="11" height="12" viewBox="0 0 11 12"><path d="M0.5 4.5L5.5 0.5L10.5 4.5V11.5H0.5Z" fill="#313335" stroke="#6b6b6b"/><path d="M3 7.5H8" stroke="#7a7a7a"/></svg>
<svg style="left:480px;top:133px;" width="11" height="12" viewBox="0 0 11 12"><path d="M0.5 0.5H10.5V7.5L5.5 11.5L0.5 7.5Z" fill="#313335" stroke="#6b6b6b"/><path d="M3 4.5H8" stroke="#7a7a7a"/></svg>
<svg style="left:480px;top:201px;" width="11" height="12" viewBox="0 0 11 12"><path d="M0.5 0.5H10.5V7.5L5.5 11.5L0.5 7.5Z" fill="#313335" stroke="#6b6b6b"/><path d="M3 4.5H8" stroke="#7a7a7a"/></svg>
<svg style="left:480px;top:235px;" width="11" height="12" viewBox="0 0 11 12"><path d="M0.5 4.5L5.5 0.5L10.5 4.5V11.5H0.5Z" fill="#313335" stroke="#6b6b6b"/><path d="M3 7.5H8" stroke="#7a7a7a"/></svg>
<svg style="left:480px;top:252px;" width="11" height="12" viewBox="0 0 11 12"><path d="M0.5 0.5H10.5V7.5L5.5 11.5L0.5 7.5Z" fill="#313335" stroke="#6b6b6b"/><path d="M3 4.5H8" stroke="#7a7a7a"/></svg>
<svg style="left:480px;top:269px;" width="11" height="12" viewBox="0 0 11 12"><path d="M0.5 4.5L5.5 0.5L10.5 4.5V11.5H0.5Z" fill="#313335" stroke="#6b6b6b"/><path d="M3 7.5H8" stroke="#7a7a7a"/></svg>
<svg style="left:480px;top:320px;" width="11" height="12" viewBox="0 0 11 12"><path d="M0.5 4.5L5.5 0.5L10.5 4.5V11.5H0.5Z" fill="#313335" stroke="#6b6b6b"/><path d="M3 7.5H8" stroke="#7a7a7a"/></svg>
<div class="t" style="left:805.5px;top:167px;font-size:12px;line-height:12px;color:#a9b7c6;font-family:'Liberation Mono',monospace;letter-spacing:0.127px;">ent(</div>
<div class="a" style="left:840px;top:163px;width:89px;height:15px;background:#3b3b3b;border-radius:3px"></div>
<div class="t" style="left:843px;top:167px;font-size:11px;line-height:11px;color:#787878;font-family:'Liberation Sans',sans-serif;letter-spacing:0.092px;">packageContext:</div>
<div class="t" style="left:934.5px;top:167px;font-size:12px;line-height:12px;color:#a9b7c6;font-family:'Liberation Mono',monospace;letter-spacing:0.127px;">MainActivity.</div>
<div class="t" style="left:1029.79px;top:167px;font-size:12px;line-height:12px;color:#cc7832;font-family:'Liberation Mono',monospace;letter-spacing:0.127px;">this</div>
<div class="t" style="left:1059.11px;top:167px;font-size:12px;line-height:12px;color:#a9b7c6;font-family:'Liberation Mono',monospace;letter-spacing:0.127px;">, HomeActivity.</div>
<div class="t" style="left:1169.06px;top:167px;font-size:12px;line-height:12px;color:#cc7832;font-family:'Liberation Mono',monospace;letter-spacing:0.127px;">class</div>
<div class="t" style="left:1205.71px;top:167px;font-size:12px;line-height:12px;color:#a9b7c6;font-family:'Liberation Mono',monospace;">)</div>
<div class="t" style="left:1213.04px;top:167px;font-size:12px;line-height:12px;color:#cc7832;font-family:'Liberation Mono',monospace;">;</div>
<div class="t" style="left:805.5px;top:201px;font-size:12px;line-height:12px;color:#a9b7c6;font-family:'Liberation Mono',monospace;letter-spacing:0.127px;">on e) {</div>
<div class="t" style="left:752.5px;top:167px;font-size:12px;line-height:12px;color:#cc7832;font-family:'Liberation Mono',monospace;">n</div>
<div class="t" style="left:752.5px;top:184px;font-size:12px;line-height:12px;color:#cc7832;font-family:'Liberation Mono',monospace;">c</div>
<div class="a" style="left:428px;top:75px;width:460px;height:22px;background:#2b2b2b;border:1px solid #5a5a5a;border-top:none"></div>
<div class="a" style="left:428px;top:75px;width:460px;height:1px;background:#5a5a5a;"></div>
<div class="t" style="left:437px;top:84px;font-size:11px;line-height:11px;color:#606366;font-family:'Liberation Mono',monospace;">11</div>
<svg style="left:454px;top:78px;" width="16" height="16" viewBox="0 0 16 16"><path d="M4 0H12V7H4Z" fill="#a9b2ba"/><path d="M4 0L8 0L4 4Z" fill="#3e3f41"/><path d="M4 4L8 0V4Z" fill="#dfe3e6"/><rect x="1" y="8" width="14" height="8" fill="#e0622a"/><path d="M6 10L4 12L6 14M10 10L12 12L10 14" stroke="#5a1d05" stroke-width="1" fill="none"/></svg>
<div class="a" style="left:475px;top:76px;width:1px;height:20px;background:#555555;"></div>
<div class="a" style="left:485px;top:76px;width:1px;height:20px;background:#555555;"></div>
<div class="a" style="left:872px;top:78px;width:8px;height:17px;background:#3b514d;"></div>
<div class="t" style="left:806.4px;top:83px;font-size:12px;line-height:12px;color:#a9b7c6;font-family:'Liberation Mono',monospace;letter-spacing:0.127px;">Activity </div>
<div class="t" style="left:872.37px;top:83px;font-size:12px;line-height:12px;color:#ffef28;font-family:'Liberation Mono',monospace;">{</div>
<div class="a" style="left:428px;top:452px;width:830px;height:24px;background:#323335;"></div>
<div class="a" style="left:428px;top:452px;width:830px;height:1px;background:#2b2b2b;"></div>
<div class="a" style="left:1258px;top:72px;width:22px;height:562px;background:#3e3f41;"></div>
<div class="a" style="left:1258px;top:72px;width:1px;height:562px;background:#2e3032;"></div>
<svg style="left:1261px;top:80px;" width="16" height="13" viewBox="0 0 16 13"><path d="M1 12C0 6 4 2 9 3C11 0 15 1 15 3C13 3 13 5 14 8C13 11 9 10 8 9C7 11 3 12 1 12Z" fill="#adadad"/></svg>
<div class="t" style="left:1253.5px;top:109.5px;width:51px;font-size:12px;line-height:12px;color:#bbbbbb;letter-spacing:-0.836px;transform-origin:15.5px 6.0px;transform:rotate(90deg);will-change:auto">Gradle</div>
<svg style="left:1264px;top:509px;" width="11" height="13" viewBox="0 0 11 13"><rect x="0.75" y="0.75" width="9" height="11.5" rx="1" fill="none" stroke="#adadad" stroke-width="1.5"/><rect x="2" y="9" width="7" height="2" fill="#adadad"/></svg>
<div class="t" style="left:1223.0px;top:565.0px;width:110px;font-size:12px;line-height:12px;color:#bbbbbb;letter-spacing:-0.869px;transform-origin:45.0px 6.0px;transform:rotate(90deg);will-change:auto">Device File Explorer</div>
<div class="a" style="left:23px;top:476px;width:1235px;height:159px;background:#3e3f41;"></div>
<div class="a" style="left:23px;top:476px;width:1235px;height:1px;background:#2e3032;"></div>
<div class="t" style="left:30px;top:483px;font-size:12px;line-height:12px;color:#bbbbbb;font-family:'Liberation Sans',sans-serif;letter-spacing:0.831px;">Build:</div>
<div class="a" style="left:66px;top:477px;width:103px;height:23px;background:#35373a;"></div>
<div class="t" style="left:78px;top:483px;font-size:12px;line-height:12px;color:#bbbbbb;font-family:'Liberation Sans',sans-serif;letter-spacing:0.082px;">Build Output</div>
<svg style="left:152px;top:484px;" width="8" height="8" viewBox="0 0 8 8"><path d="M0.5 0.5L7.5 7.5M7.5 0.5L0.5 7.5" stroke="#707070" stroke-width="1.1"/></svg>
<div class="t" style="left:184px;top:483px;font-size:12px;line-height:12px;color:#bbbbbb;font-family:'Liberation Sans',sans-serif;letter-spacing:-0.668px;">Sync</div>
<svg style="left:216px;top:484px;" width="8" height="8" viewBox="0 0 8 8"><path d="M0.5 0.5L7.5 7.5M7.5 0.5L0.5 7.5" stroke="#707070" stroke-width="1.1"/></svg>
<svg style="left:1211px;top:481px;" width="14" height="14" viewBox="0 0 14 14"><path d="M7 0.8L8.5 2.6L10.8 1.8L11.1 4.2L13.4 5L12.3 7.2L13.7 9.2L11.5 10.1L11.4 12.5L9 12.2L7.5 14.2L5.8 12.4L3.5 13L3.2 10.6L0.9 9.8L2 7.6L0.5 5.6L2.8 4.7L3 2.3L5.3 2.6Z" fill="#adadad"/><circle cx="7" cy="7.5" r="2" fill="#3e3f41"/></svg>
<div class="a" style="left:1238px;top:487px;width:12px;height:2px;background:#adadad;"></div>
<div class="a" style="left:23px;top:500px;width:1235px;height:1px;background:#323232;"></div>
<div class="a" style="left:51px;top:501px;width:1px;height:134px;background:#323232;"></div>
<svg style="left:28px;top:507px;" width="16" height="16" viewBox="0 0 16 16"><path d="M1 4.5L5.5 0.5L8.5 3.5L6.8 5.2L15 13.5L13 15.5L4.8 7.2L3.5 8.5Z" fill="#59a869"/></svg>
<div class="a" style="left:27px;top:532px;width:18px;height:1px;background:#4b4d4f;"></div>
<svg style="left:29px;top:542px;" width="15" height="14" viewBox="0 0 15 14"><rect x="0.75" y="0.75" width="9" height="8" fill="none" stroke="#adadad" stroke-width="1.5"/><rect x="4" y="4" width="10.5" height="9.5" fill="#adadad"/><path d="M7.5 6.5L11 8.8L7.5 11Z" fill="#3e3f41"/></svg>
<div class="a" style="left:27px;top:566px;width:18px;height:1px;background:#4b4d4f;"></div>
<svg style="left:29px;top:575px;" width="15" height="15" viewBox="0 0 15 15"><path d="M8 0L15 7L13 8L11 7L8 10L8.5 12L7 13.5L4.5 11L0.5 15L0 14.5L4 10.5L1.5 8L3 6.5L5 7L8 4L7 2Z" fill="#adadad"/></svg>
<div class="a" style="left:52px;top:581px;width:1206px;height:16px;background:#0d293e;"></div>
<svg style="left:55px;top:506px;" width="10" height="8" viewBox="0 0 10 8"><path d="M0 0H10L5 8Z" fill="#bfbfbf"/></svg>
<svg style="left:74px;top:505px;" width="13" height="11" viewBox="0 0 13 11"><path d="M1.2 5.5L4.8 9L11.8 1.5" fill="none" stroke="#59a869" stroke-width="2.6"/></svg>
<div class="t" style="left:92px;top:504px;font-size:12px;line-height:12px;color:#bbbbbb;font-family:'Liberation Sans',sans-serif;font-weight:bold;-webkit-text-stroke:0.35px currentColor;letter-spacing:-0.09px;">Build:</div>
<div class="t" style="left:125.4px;top:504px;font-size:12px;line-height:12px;color:#bbbbbb;font-family:'Liberation Sans',sans-serif;letter-spacing:-0.09px;"> completed successfully</div>
<div class="t" style="left:250.1px;top:504px;font-size:12px;line-height:12px;color:#808080;font-family:'Liberation Sans',sans-serif;letter-spacing:-0.09px;"> at 10-Mar-20 10:21 PM</div>
<div class="t" style="left:1203.0px;top:504px;font-size:12px;line-height:12px;color:#808080;font-family:'Liberation Sans',sans-serif;">4 s 56 ms</div>
<svg style="left:73px;top:522px;" width="10" height="8" viewBox="0 0 10 8"><path d="M0 0H10L5 8Z" fill="#bfbfbf"/></svg>
<svg style="left:92px;top:521px;" width="13" height="11" viewBox="0 0 13 11"><path d="M1.2 5.5L4.8 9L11.8 1.5" fill="none" stroke="#59a869" stroke-width="2.6"/></svg>
<div class="t" style="left:110px;top:520px;font-size:12px;line-height:12px;color:#bbbbbb;font-family:'Liberation Sans',sans-serif;letter-spacing:-0.09px;">Run build</div>
<div class="t" style="left:159.9px;top:520px;font-size:12px;line-height:12px;color:#808080;font-family:'Liberation Sans',sans-serif;letter-spacing:-0.09px;"> F:\Mahedi\Android Projects\Example</div>
<div class="t" style="left:1196.3px;top:520px;font-size:12px;line-height:12px;color:#808080;font-family:'Liberation Sans',sans-serif;">3 s 594 ms</div>
<svg style="left:92px;top:537px;" width="8" height="10" viewBox="0 0 8 10"><path d="M0 0L8 5L0 10Z" fill="#bfbfbf"/></svg>
<svg style="left:110px;top:537px;" width="13" height="11" viewBox="0 0 13 11"><path d="M1.2 5.5L4.8 9L11.8 1.5" fill="none" stroke="#59a869" stroke-width="2.6"/></svg>
<div class="t" style="left:127px;top:536px;font-size:12px;line-height:12px;color:#bbbbbb;font-family:'Liberation Sans',sans-serif;letter-spacing:-0.09px;">Load build</div>
<div class="t" style="left:1229.0px;top:536px;font-size:12px;line-height:12px;color:#808080;font-family:'Liberation Sans',sans-serif;">5 ms</div>
<svg style="left:92px;top:553px;" width="8" height="10" viewBox="0 0 8 10"><path d="M0 0L8 5L0 10Z" fill="#bfbfbf"/></svg>
<svg style="left:110px;top:553px;" width="13" height="11" viewBox="0 0 13 11"><path d="M1.2 5.5L4.8 9L11.8 1.5" fill="none" stroke="#59a869" stroke-width="2.6"/></svg>
<div class="t" style="left:127px;top:552px;font-size:12px;line-height:12px;color:#bbbbbb;font-family:'Liberation Sans',sans-serif;letter-spacing:-0.09px;">Configure build</div>
<div class="t" style="left:1215.7px;top:552px;font-size:12px;line-height:12px;color:#808080;font-family:'Liberation Sans',sans-serif;">991 ms</div>
<svg style="left:110px;top:569px;" width="13" height="11" viewBox="0 0 13 11"><path d="M1.2 5.5L4.8 9L11.8 1.5" fill="none" stroke="#59a869" stroke-width="2.6"/></svg>
<div class="t" style="left:127px;top:568px;font-size:12px;line-height:12px;color:#bbbbbb;font-family:'Liberation Sans',sans-serif;letter-spacing:-0.09px;">Calculate task graph</div>
<div class="t" style="left:1215.7px;top:568px;font-size:12px;line-height:12px;color:#808080;font-family:'Liberation Sans',sans-serif;">517 ms</div>
<svg style="left:92px;top:585px;" width="8" height="10" viewBox="0 0 8 10"><path d="M0 0L8 5L0 10Z" fill="#bfbfbf"/></svg>
<svg style="left:110px;top:585px;" width="13" height="11" viewBox="0 0 13 11"><path d="M1.2 5.5L4.8 9L11.8 1.5" fill="none" stroke="#59a869" stroke-width="2.6"/></svg>
<div class="t" style="left:127px;top:584px;font-size:12px;line-height:12px;color:#bbbbbb;font-family:'Liberation Sans',sans-serif;letter-spacing:-0.09px;">Run tasks</div>
<div class="t" style="left:1196.3px;top:584px;font-size:12px;line-height:12px;color:#bbbbbb;font-family:'Liberation Sans',sans-serif;">1 s 932 ms</div>
<div class="a" style="left:0px;top:635px;width:1280px;height:25px;background:#3e3f41;"></div>
<div class="a" style="left:0px;top:635px;width:1280px;height:1px;background:#323232;"></div>
<div class="a" style="left:172px;top:637px;width:60px;height:22px;background:#2f3133;"></div>
<svg style="left:28px;top:643px;" width="13" height="11" viewBox="0 0 13 11"><path d="M0 1H2.5M0 5H2.5M0 9H2.5M4 1H13M4 5H13M4 9H13" stroke="#adadad" stroke-width="2"/></svg>
<div class="t" style="left:50px;top:643px;font-size:12px;line-height:12px;color:#bbbbbb;font-family:'Liberation Sans',sans-serif;letter-spacing:-1.109px;">TODO</div>
<svg style="left:100px;top:642px;" width="13" height="12" viewBox="0 0 13 12"><rect width="13" height="12" fill="#adadad"/><path d="M2.5 2.5L5.5 5L2.5 7.5" stroke="#3e3f41" stroke-width="1.4" fill="none"/><path d="M6 9.5H10" stroke="#3e3f41" stroke-width="1.4"/></svg>
<div class="t" style="left:117px;top:643px;font-size:12px;line-height:12px;color:#bbbbbb;font-family:'Liberation Sans',sans-serif;letter-spacing:-0.170px;">Terminal</div>
<svg style="left:181px;top:641px;" width="14" height="14" viewBox="0 0 14 14"><path d="M0.5 3.5L4.5 0L7 2.5L5.5 4L13.5 12L12 13.5L4 5.5L3 6.5Z" fill="#cfcfcf"/></svg>
<div class="t" style="left:198px;top:643px;font-size:12px;line-height:12px;color:#c8c8c8;font-family:'Liberation Sans',sans-serif;letter-spacing:-0.537px;">Build</div>
<svg style="left:244px;top:643px;" width="13" height="11" viewBox="0 0 13 11"><path d="M0 1H13M0 4.5H9M0 8H13" stroke="#adadad" stroke-width="2"/></svg>
<div class="t" style="left:260px;top:643px;font-size:12px;line-height:12px;color:#bbbbbb;font-family:'Liberation Sans',sans-serif;letter-spacing:-0.372px;">6: Logcat</div>
<div class="a" style="left:260px;top:654px;width:6px;height:1px;background:#9a9a9a;"></div>
<svg style="left:326px;top:643px;" width="14" height="11" viewBox="0 0 14 11"><path d="M1.5 10A6 6 0 0 1 8 2.5" fill="none" stroke="#adadad" stroke-width="2.3"/><path d="M8 2.5A6 6 0 0 1 13 10" fill="none" stroke="#adadad" stroke-width="2.3"/><path d="M6.5 10L9 5" stroke="#adadad" stroke-width="1.8"/></svg>
<div class="t" style="left:344px;top:643px;font-size:12px;line-height:12px;color:#bbbbbb;font-family:'Liberation Sans',sans-serif;letter-spacing:-0.127px;">Profiler</div>
<svg style="left:401px;top:642px;" width="13" height="13" viewBox="0 0 13 13"><path d="M0 0L9 5.5L0 11Z" fill="#adadad"/><circle cx="10" cy="10" r="2.3" fill="#62b543"/></svg>
<div class="t" style="left:416px;top:643px;font-size:12px;line-height:12px;color:#bbbbbb;font-family:'Liberation Sans',sans-serif;letter-spacing:-0.724px;">4: Run</div>
<div class="a" style="left:416px;top:654px;width:6px;height:1px;background:#9a9a9a;"></div>
<svg style="left:1179px;top:641px;" width="14" height="14" viewBox="0 0 14 14"><circle cx="7" cy="7" r="6.5" fill="#e3a22b"/><text x="6.5" y="10" font-size="8" font-family="Liberation Sans" font-weight="bold" fill="#3e3f41" text-anchor="middle">9+</text></svg>
<div class="t" style="left:1198px;top:643px;font-size:12px;line-height:12px;color:#bbbbbb;font-family:'Liberation Sans',sans-serif;letter-spacing:-0.557px;">Event Log</div>
<div class="a" style="left:0px;top:660px;width:1280px;height:20px;background:#3e3f41;"></div>
<svg style="left:10px;top:664px;" width="12" height="12" viewBox="0 0 12 12"><rect x="0.75" y="3.25" width="8" height="8" fill="none" stroke="#adadad" stroke-width="1.3"/><path d="M3 3V0.75H11.25V9H9" fill="none" stroke="#adadad" stroke-width="1.3"/></svg>
<div class="t" style="left:31px;top:665px;font-size:12px;line-height:12px;color:#bbbbbb;font-family:'Liberation Sans',sans-serif;letter-spacing:-0.071px;">Install successfully finished in 1 s 200 ms.: App restart successful without requiring a re-install. (a minute ago)</div>
<div class="t" style="left:989px;top:665px;font-size:12px;line-height:12px;color:#bbbbbb;font-family:'Liberation Sans',sans-serif;letter-spacing:-0.336px;">35:2</div>
<div class="t" style="left:1022px;top:665px;font-size:12px;line-height:12px;color:#bbbbbb;font-family:'Liberation Sans',sans-serif;letter-spacing:-0.836px;">CRLF</div>
<svg style="left:1054px;top:665px;" width="6" height="10" viewBox="0 0 6 10"><path d="M0 4L3 0.5L6 4ZM0 6L3 9.5L6 6Z" fill="#bbbbbb"/></svg>
<div class="t" style="left:1070px;top:665px;font-size:12px;line-height:12px;color:#bbbbbb;font-family:'Liberation Sans',sans-serif;letter-spacing:-0.400px;">UTF-8</div>
<svg style="left:1106px;top:665px;" width="6" height="10" viewBox="0 0 6 10"><path d="M0 4L3 0.5L6 4ZM0 6L3 9.5L6 6Z" fill="#bbbbbb"/></svg>
<div class="t" style="left:1122px;top:665px;font-size:12px;line-height:12px;color:#bbbbbb;font-family:'Liberation Sans',sans-serif;letter-spacing:-0.002px;">4 spaces</div>
<svg style="left:1176px;top:665px;" width="6" height="10" viewBox="0 0 6 10"><path d="M0 4L3 0.5L6 4ZM0 6L3 9.5L6 6Z" fill="#bbbbbb"/></svg>
<svg style="left:1187px;top:663px;" width="14" height="14" viewBox="0 0 14 14"><rect x="4.5" y="7" width="9" height="7" fill="#adadad"/><path d="M1 6V3.5A2.5 2.5 0 0 1 6 3.5V7" fill="none" stroke="#adadad" stroke-width="1.5"/></svg>
<svg style="left:1212px;top:663px;" width="14" height="14" viewBox="0 0 14 14"><circle cx="7" cy="7" r="7" fill="#adadad"/><circle cx="4.8" cy="5.5" r="1" fill="#3e3f41"/><circle cx="9.2" cy="5.5" r="1" fill="#3e3f41"/><path d="M4 8.5Q7 11.5 10 8.5" fill="none" stroke="#3e3f41" stroke-width="1.2"/></svg>
<svg style="left:1236px;top:663px;" width="14" height="14" viewBox="0 0 14 14"><circle cx="7" cy="7" r="7" fill="#adadad"/><circle cx="4.8" cy="5.5" r="1" fill="#3e3f41"/><circle cx="9.2" cy="5.5" r="1" fill="#3e3f41"/><path d="M4 10.5Q7 7.5 10 10.5" fill="none" stroke="#3e3f41" stroke-width="1.2"/></svg>
<svg style="left:1260px;top:663px;" width="14" height="14" viewBox="0 0 14 14"><path d="M3 5H11L10 1H4Z" fill="#adadad"/><rect x="0" y="5" width="14" height="1.5" fill="#adadad"/><circle cx="4.5" cy="9.5" r="2.3" fill="none" stroke="#adadad" stroke-width="1.2"/><circle cx="9.5" cy="9.5" r="2.3" fill="none" stroke="#adadad" stroke-width="1.2"/><path d="M2 14C3 12 11 12 12 14" stroke="#adadad" fill="none"/></svg>
<div class="a" style="left:0;top:680px;width:1280px;height:40px;background:linear-gradient(90deg,#dddfeb 0%,#d9e0ea 45%,#d2e2eb 75%,#d2e2eb 100%);border-top:1px solid #e6ebf2"></div>
<svg style="left:16px;top:692px;" width="16" height="16" viewBox="0 0 16 16"><path d="M0 2.2L6.5 1.3V7.6H0ZM7.3 1.2L16 0V7.6H7.3ZM0 8.4H6.5V14.7L0 13.8ZM7.3 8.4H16V16L7.3 14.8Z" fill="#111"/></svg>
<svg style="left:63px;top:692px;" width="17" height="17" viewBox="0 0 17 17"><circle cx="10" cy="7" r="6" fill="none" stroke="#222" stroke-width="1.3"/><path d="M5.8 11.2L0.8 16.2" stroke="#222" stroke-width="1.5"/></svg>
<svg style="left:111px;top:692px;" width="17" height="16" viewBox="0 0 17 16"><rect x="2" y="3" width="11" height="10" fill="none" stroke="#333" stroke-width="1.2"/><rect x="2" y="11" width="11" height="3" fill="#999"/><path d="M0 0.5H13M0 15.5H13" stroke="#333"/><path d="M16 1V15" stroke="#999" stroke-width="1.5"/><path d="M16 5V8" stroke="#222" stroke-width="1.5"/></svg>
<svg style="left:160px;top:690px;" width="22" height="19" viewBox="0 0 22 19"><path d="M0 2H8L10 0H22V17H0Z" fill="#e8b64d"/><rect x="0" y="4" width="22" height="15" fill="#f8d775"/><path d="M6 19V11H16V19H13V14H9V19Z" fill="#3d8fd0"/></svg>
<div class="a" style="left:151px;top:717px;width:41px;height:3px;background:#2a9cb8;"></div>
<svg style="left:210px;top:689px;" width="22" height="22" viewBox="0 0 22 22"><path d="M1 3H16L20 7V21H1Z" fill="#f3f3e0" stroke="#ccc"/><ellipse cx="10" cy="14" rx="8" ry="5" fill="#6fb740"/><circle cx="13" cy="10" r="3" fill="#4a9c2d"/><path d="M17 15L22 0" stroke="#b99a4a" stroke-width="2"/></svg>
<svg style="left:259px;top:688px;" width="24" height="24" viewBox="0 0 24 24"><path d="M2 2L18 0L24 6L20 24L4 22L0 8Z" fill="#1ec0d8"/><path d="M14 0L24 2L22 10Z" fill="#d5e86c"/><rect x="4" y="4" width="16" height="16" fill="#000"/><text x="12" y="13" font-size="8" font-weight="bold" font-family="Liberation Sans" fill="#fff" text-anchor="middle">WS</text><rect x="6" y="16" width="6" height="1.5" fill="#fff"/></svg>
<svg style="left:309px;top:688px;" width="24" height="24" viewBox="0 0 24 24"><path d="M2 0L18 1L24 12L20 24L4 22L0 8Z" fill="#af1df5"/><path d="M0 2L10 0L4 14Z" fill="#ff318c"/><rect x="4" y="4" width="16" height="16" fill="#000"/><text x="12" y="13" font-size="8" font-weight="bold" font-family="Liberation Sans" fill="#fff" text-anchor="middle">PS</text><rect x="6" y="16" width="6" height="1.5" fill="#fff"/></svg>
<svg style="left:359px;top:689px;" width="24" height="22" viewBox="0 0 24 22"><rect x="6" y="0" width="18" height="22" rx="1.5" fill="#2b7cd3"/><rect x="6" y="0" width="18" height="6" rx="1.5" fill="#41a5ee"/><rect x="6" y="11" width="18" height="6" fill="#185abd"/><rect x="0" y="5" width="12" height="12" rx="1" fill="#185abd"/><text x="6" y="14.5" font-size="9" font-weight="bold" font-family="Liberation Sans" fill="#fff" text-anchor="middle">W</text></svg>
<svg style="left:408px;top:688px;" width="25" height="24" viewBox="0 0 25 24"><circle cx="13" cy="12" r="12" fill="#ed6c47"/><path d="M13 0A12 12 0 0 1 25 12H13Z" fill="#ff8f6b"/><path d="M13 12H25A12 12 0 0 1 13 24Z" fill="#d35230"/><rect x="0" y="6" width="12" height="12" rx="1" fill="#c43e1c"/><text x="6" y="15.5" font-size="9" font-weight="bold" font-family="Liberation Sans" fill="#fff" text-anchor="middle">P</text></svg>
<svg style="left:458px;top:689px;" width="25" height="22" viewBox="0 0 25 22"><rect x="6" y="0" width="19" height="22" rx="1.5" fill="#21a366"/><rect x="6" y="0" width="19" height="6" rx="1.5" fill="#33c481"/><rect x="6" y="11" width="19" height="11" fill="#107c41"/><rect x="15" y="0" width="10" height="22" fill="#33c481" opacity="0.5"/><rect x="0" y="5" width="12" height="12" rx="1" fill="#107c41"/><text x="6" y="14.5" font-size="9" font-weight="bold" font-family="Liberation Sans" fill="#fff" text-anchor="middle">X</text></svg>
<svg style="left:509px;top:688px;" width="24" height="24" viewBox="0 0 24 24"><circle cx="12" cy="12" r="11.5" fill="#db4437"/><path d="M12 12L2 6.2A11.5 11.5 0 0 0 12 23.5Z" fill="#0f9d58"/><path d="M12 12L12 23.5A11.5 11.5 0 0 0 22 6.2Z" fill="#f4c20d"/><path d="M2 6.2L12 12L22 6.2A11.5 11.5 0 0 0 2 6.2Z" fill="#db4437"/><circle cx="12" cy="12" r="5.3" fill="#fff"/><circle cx="12" cy="12" r="4.2" fill="#4285f4"/></svg>
<svg style="left:560px;top:689px;" width="22" height="21" viewBox="0 0 22 21"><rect x="0.75" y="0.75" width="20.5" height="19.5" fill="#1f0040" stroke="#c99dff" stroke-width="1.5"/><text x="11" y="15" font-size="11" font-family="Liberation Sans" fill="#d6b3ff" text-anchor="middle">Ae</text></svg>
<svg style="left:610px;top:689px;" width="22" height="21" viewBox="0 0 22 21"><rect x="0.75" y="0.75" width="20.5" height="19.5" fill="#001e36" stroke="#31a8ff" stroke-width="1.5"/><text x="11" y="15" font-size="11" font-family="Liberation Sans" fill="#31a8ff" text-anchor="middle">Ps</text></svg>
<svg style="left:660px;top:689px;" width="22" height="21" viewBox="0 0 22 21"><rect x="0.75" y="0.75" width="20.5" height="19.5" fill="#330000" stroke="#ff9a00" stroke-width="1.5"/><text x="11" y="15" font-size="11" font-family="Liberation Sans" fill="#ff9a00" text-anchor="middle">Ai</text></svg>
<svg style="left:711px;top:690px;" width="21" height="21" viewBox="0 0 21 21"><circle cx="10.5" cy="10.5" r="10.5" fill="#7cb342"/><path d="M10.5 4V11M5 19L10.5 10L16 19" stroke="#eef6e6" stroke-width="1.6" fill="none"/><circle cx="10.5" cy="10.5" r="2" fill="#eef6e6"/><circle cx="10.5" cy="10.5" r="7" fill="none" stroke="#b7d98f" stroke-width="1"/></svg>
<div class="a" style="left:701px;top:717px;width:41px;height:3px;background:#2a9cb8;"></div>
<div class="a" style="left:747px;top:680px;width:49px;height:40px;background:#eaf0f5;"></div>
<div class="a" style="left:747px;top:717px;width:49px;height:3px;background:#2a9cb8;"></div>
<svg style="left:759px;top:692px;" width="23" height="16" viewBox="0 0 23 16"><rect width="23" height="16" fill="#6ba83a"/><rect x="7.5" y="1.5" width="8" height="14.5" rx="1" fill="#f5f5f5" stroke="#333" stroke-width="1.2"/></svg>
<svg style="left:1043px;top:696px;" width="13" height="7" viewBox="0 0 13 7"><path d="M0.5 6.5L6.5 0.7L12.5 6.5" fill="none" stroke="#222" stroke-width="1.2"/></svg>
<svg style="left:1068px;top:692px;" width="10" height="16" viewBox="0 0 10 16"><rect x="1.5" y="0" width="7" height="11" rx="1.5" fill="#111"/><path d="M0.5 9A4.5 4.5 0 0 0 9.5 9M5 13.5V15.5M2.5 15.5H7.5" stroke="#555" fill="none"/></svg>
<svg style="left:1089px;top:694px;" width="17" height="10" viewBox="0 0 17 10"><path d="M0 2V8M2 0.5V3M4 0.5V3M1 3H5V6H3" stroke="#222" fill="none"/><rect x="5.5" y="2.5" width="11" height="7" fill="#111"/><rect x="7" y="4" width="8" height="4" fill="#111"/></svg>
<svg style="left:1116px;top:692px;" width="14" height="15" viewBox="0 0 14 15"><path d="M1 14A13 13 0 0 1 13 2M4 14A10 10 0 0 1 13 5M7 14A7 7 0 0 1 13 8" stroke="#777" stroke-width="1.1" fill="none"/><circle cx="12" cy="13" r="1.5" fill="#222"/></svg>
<svg style="left:1138px;top:692px;" width="16" height="15" viewBox="0 0 16 15"><path d="M0.5 5H3.5L8 1V14L3.5 10H0.5Z" fill="none" stroke="#222" stroke-width="1.1"/><path d="M10 5Q11.5 7.5 10 10M12.5 3Q15 7.5 12.5 12" stroke="#222" stroke-width="1.1" fill="none"/></svg>
<div class="t" style="left:1168px;top:686px;font-size:12px;line-height:12px;color:#111111;font-family:'Liberation Sans',sans-serif;letter-spacing:-0.293px;">10:21 PM</div>
<div class="t" style="left:1165px;top:704px;font-size:12px;line-height:12px;color:#111111;font-family:'Liberation Sans',sans-serif;letter-spacing:-0.040px;">10-Mar-20</div>
<svg style="left:1238px;top:691px;" width="26" height="26" viewBox="0 0 26 26"><path d="M1 1H17V13H7L3 17V13H1Z" fill="#111"/><path d="M4 4.5H14M4 7H14M4 9.5H11" stroke="#ddd" stroke-width="1"/><circle cx="16" cy="17" r="7.5" fill="#dfe5ec" stroke="#555" stroke-width="1"/><text x="16" y="21" font-size="11" font-family="Liberation Sans" fill="#111" text-anchor="middle">6</text></svg>
<div class="a" style="left:1275px;top:680px;width:1px;height:40px;background:#b5bcc4;"></div>
<div class="a" style="left:488px;top:60px;width:270px;height:563px;border-radius:31px 31px 28px 28px;background:linear-gradient(180deg,#a0a0a0 0%,#8a8a8a 47%,#3c3c3c 64%,#2c2c2c 95%,#5a5a5a 100%)"></div>
<div class="a" style="left:491px;top:62px;width:263px;height:559px;border-radius:29px 29px 25px 25px;background:#262626"></div>
<div class="a" style="left:493px;top:65px;width:260px;height:555px;border-radius:27px 27px 24px 24px;background:linear-gradient(180deg,#000 0%,#000 92%,#101010 95%,#1e1e1e 99%,#0a0a0a 100%);box-shadow:inset 0 1px 0 #707070"></div>
<div class="a" style="left:616px;top:73px;width:16px;height:5px;background:#141414;"></div>
<div class="a" style="left:573px;top:90px;width:102px;height:6px;background:#1b1b1b;border:1px solid #3c3c3c;border-radius:3px"></div>
<svg style="left:530px;top:88px;" width="12" height="12" viewBox="0 0 12 12"><circle cx="6" cy="6" r="4.8" fill="#0a0a18" stroke="#34345e" stroke-width="1.2"/><circle cx="6" cy="6" r="2.2" fill="#1c1c40"/><circle cx="6.4" cy="6.6" r="1" fill="#d0d0ff"/></svg>
<div class="a" style="left:500px;top:123px;width:247px;height:409px;background:#fdfcfe;"></div>
<svg style="left:600px;top:290px;" width="46" height="45" viewBox="0 0 46 45"><defs><linearGradient id="lg" x1="0" y1="0.3" x2="1" y2="0.5"><stop offset="0" stop-color="#2aa6f0"/><stop offset="0.5" stop-color="#1d6fd2"/><stop offset="1" stop-color="#2a3192"/></linearGradient><linearGradient id="lg2" x1="0" y1="0" x2="0.8" y2="1"><stop offset="0" stop-color="#22a0ee"/><stop offset="0.55" stop-color="#1b5fc4"/><stop offset="1" stop-color="#2b2f8f"/></linearGradient></defs><path d="M8.2 4H31.8L43 22.4H3.6L22.7 12Z" fill="url(#lg)"/><path d="M3.6 22.4H27.7L38 41Z" fill="url(#lg2)"/></svg>
<div class="t" style="left:583px;top:355px;font-size:20px;line-height:20px;color:#787878;font-family:'Liberation Sans',sans-serif;font-weight:bold;-webkit-text-stroke:0.35px currentColor;letter-spacing:-0.326px;-webkit-text-stroke:0.2px currentColor">Example</div>
<svg style="left:549px;top:540px;" width="11" height="13" viewBox="0 0 11 13"><path d="M10 1L1.2 6.5L10 12Z" fill="none" stroke="#f0f0f0" stroke-width="1.5" stroke-linejoin="round"/></svg>
<svg style="left:617px;top:540px;" width="12" height="12" viewBox="0 0 12 12"><circle cx="6" cy="6" r="5.2" fill="none" stroke="#f0f0f0" stroke-width="1.5"/></svg>
<svg style="left:687px;top:541px;" width="11" height="11" viewBox="0 0 11 11"><rect x="0.75" y="0.75" width="9.5" height="9.5" fill="none" stroke="#f0f0f0" stroke-width="1.5"/></svg>
<div class="a" style="left:572px;top:590px;width:101px;height:6px;background:#2a2a2a;border-radius:3px;border-bottom:1px solid #6a6a6a"></div>
<div class="a" style="left:763px;top:61px;width:47px;height:371px;background:#f3f2f6;box-shadow:0 0 0 1px rgba(20,20,20,0.5)"></div>
<div class="a" style="left:774px;top:73px;width:6px;height:1px;background:#a0a0a0;"></div>
<svg style="left:793px;top:70px;" width="7" height="7" viewBox="0 0 7 7"><path d="M0.5 0.5L6.5 6.5M6.5 0.5L0.5 6.5" stroke="#8a8a8a" stroke-width="1"/></svg>
<svg style="left:780px;top:93px;" width="13" height="13" viewBox="0 0 13 13"><path d="M3.2 3.2A5.3 5.3 0 1 0 9.8 3.2" fill="none" stroke="#5f6b73" stroke-width="1.7"/><path d="M6.5 0V6.5" stroke="#5f6b73" stroke-width="1.7"/></svg>
<svg style="left:780px;top:125px;" width="13" height="12" viewBox="0 0 13 12"><path d="M0 4H3L7 0.5V11.5L3 8H0Z" fill="#5f6b73"/><path d="M9 3.5Q10.8 6 9 8.5M10.5 1.5Q13.5 6 10.5 10.5" fill="none" stroke="#5f6b73" stroke-width="1.5"/></svg>
<svg style="left:782px;top:157px;" width="9" height="11" viewBox="0 0 9 11"><path d="M0 3.5H3L7 0V11L3 7.5H0Z" fill="#5f6b73"/><path d="M8 3.8Q9.5 5.5 8 7.2" fill="none" stroke="#5f6b73" stroke-width="1.4"/></svg>
<svg style="left:778px;top:187px;" width="16" height="16" viewBox="0 0 16 16"><rect x="4.5" y="2" width="7" height="12" rx="0.5" transform="rotate(-45 8 8)" fill="none" stroke="#5f6b73" stroke-width="1.7"/><path d="M10 0.5A8 8 0 0 1 15.5 6" fill="none" stroke="#5f6b73" stroke-width="1.2"/></svg>
<svg style="left:778px;top:218px;" width="16" height="16" viewBox="0 0 16 16"><rect x="4.5" y="2" width="7" height="12" rx="0.5" transform="rotate(45 8 8)" fill="none" stroke="#5f6b73" stroke-width="1.7"/><path d="M6 0.5A8 8 0 0 0 0.5 6" fill="none" stroke="#5f6b73" stroke-width="1.2"/></svg>
<svg style="left:780px;top:251px;" width="13" height="11" viewBox="0 0 13 11"><path d="M0 2.5H3.5L5 0.5H8L9.5 2.5H13V11H0Z" fill="#5f6b73"/><circle cx="6.5" cy="6.5" r="2.6" fill="#f3f2f6"/><circle cx="6.5" cy="6.5" r="1.6" fill="#5f6b73"/></svg>
<svg style="left:780px;top:281px;" width="13" height="13" viewBox="0 0 13 13"><circle cx="5.2" cy="5.2" r="4.3" fill="none" stroke="#5f6b73" stroke-width="1.5"/><path d="M8.3 8.3L12.5 12.5" stroke="#5f6b73" stroke-width="1.8"/><path d="M3 5.2H7.4M5.2 3V7.4" stroke="#5f6b73" stroke-width="1.2"/></svg>
<svg style="left:782px;top:313px;" width="10" height="12" viewBox="0 0 10 12"><path d="M9 1L1.3 6L9 11Z" fill="none" stroke="#5f6b73" stroke-width="1.4" stroke-linejoin="round"/></svg>
<svg style="left:780px;top:344px;" width="12" height="12" viewBox="0 0 12 12"><circle cx="6" cy="6" r="5.2" fill="none" stroke="#5f6b73" stroke-width="1.3"/></svg>
<svg style="left:781px;top:376px;" width="11" height="11" viewBox="0 0 11 11"><rect x="0.7" y="0.7" width="9.6" height="9.6" fill="none" stroke="#5f6b73" stroke-width="1.3"/></svg>
<svg style="left:780px;top:411px;" width="12" height="3" viewBox="0 0 12 3"><circle cx="1.5" cy="1.5" r="1.4" fill="#5f6b73"/><circle cx="6" cy="1.5" r="1.4" fill="#5f6b73"/><circle cx="10.5" cy="1.5" r="1.4" fill="#5f6b73"/></svg>
<svg style="left:734px;top:433px;" width="12" height="20" viewBox="0 0 12 20"><path d="M0.5 0.5V15.5L4 12L6.5 18L9 17L6.5 11H11.5Z" fill="#fdfcfe" stroke="#222" stroke-width="1"/></svg>
</body></html>
